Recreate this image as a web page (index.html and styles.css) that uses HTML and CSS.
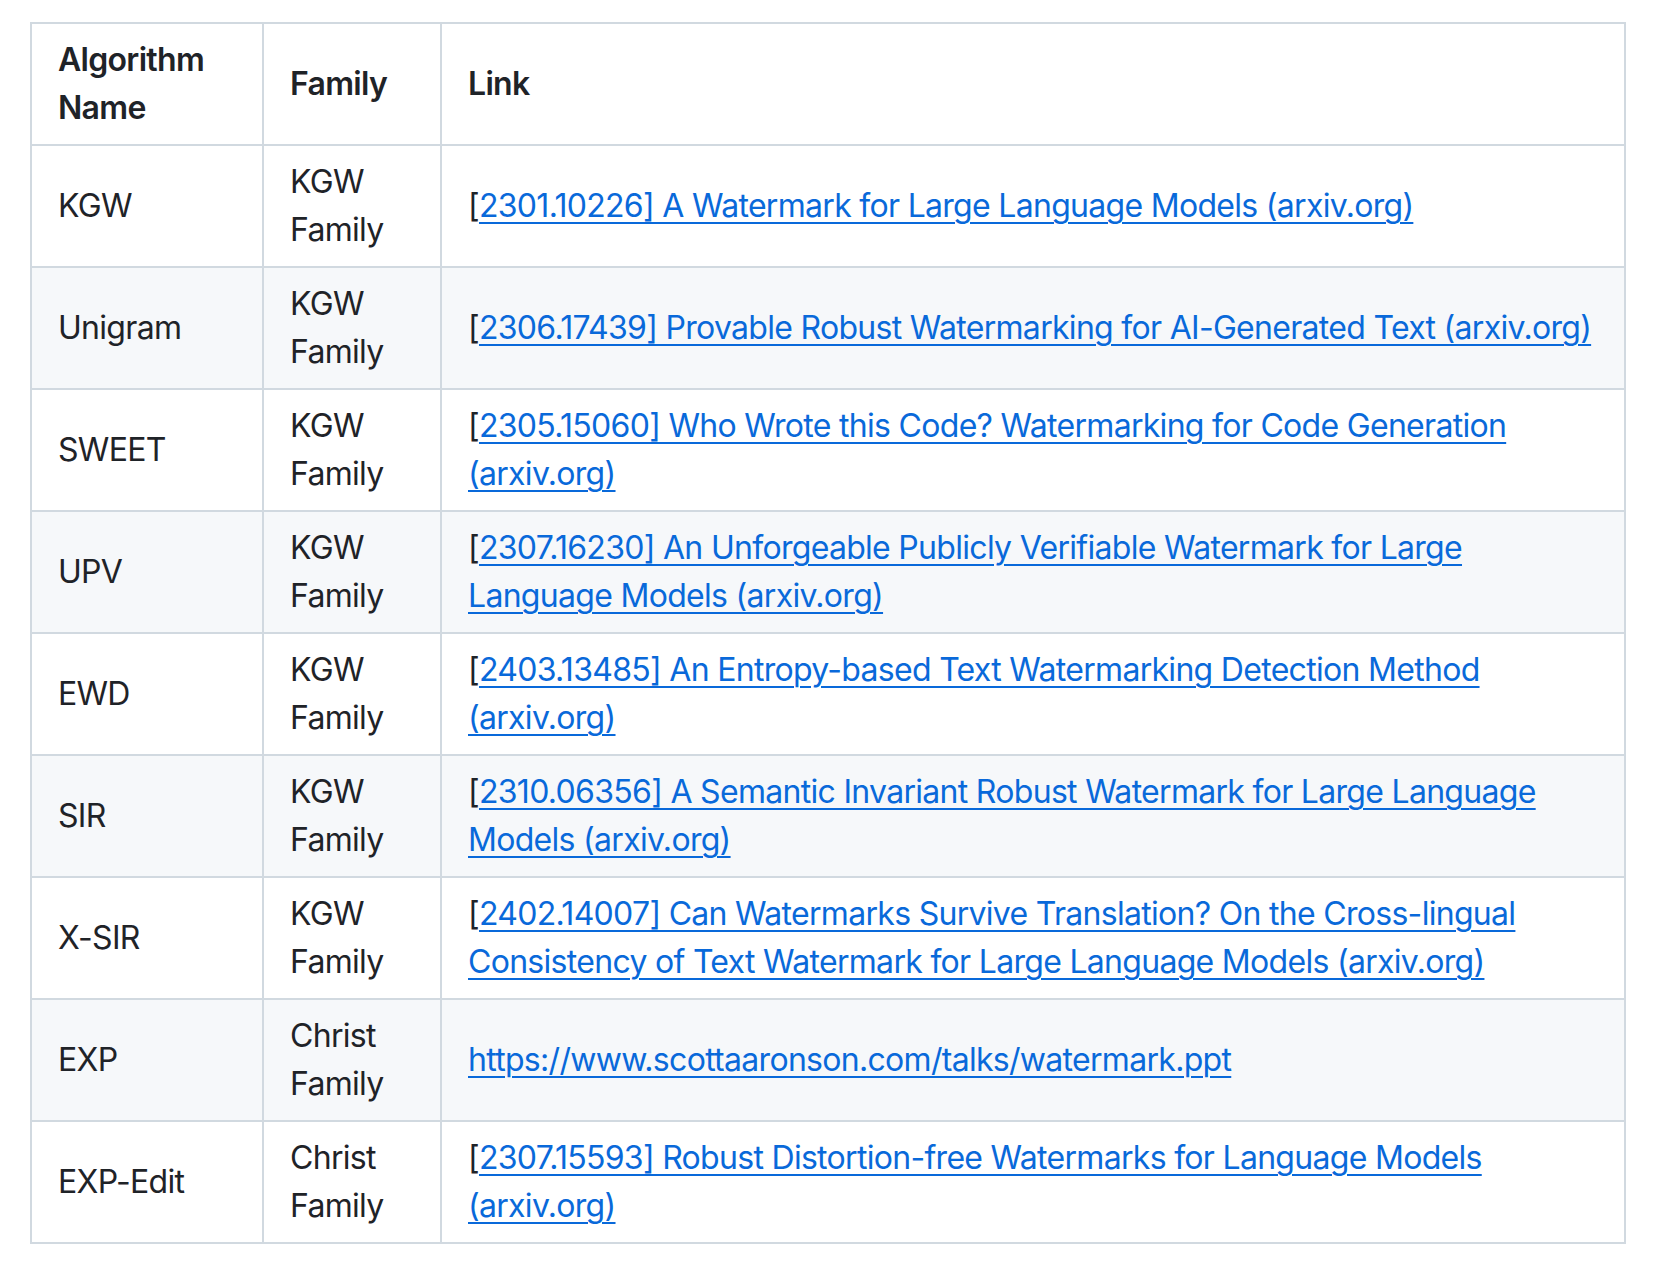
FILE: index.html
```html
<!DOCTYPE html>
<html lang="en">
<head>
<meta charset="utf-8">
<title>Watermark Algorithms</title>
<link rel="stylesheet" href="styles.css">
</head>
<body>
<div class="page">
<table class="algo-table">
  <colgroup>
    <col class="col-name">
    <col class="col-family">
    <col class="col-link">
  </colgroup>
  <thead>
    <tr><th>Algorithm Name</th><th>Family</th><th>Link</th></tr>
  </thead>
  <tbody>
    <tr><td>KGW</td><td>KGW Family</td><td class="link-cell">[<a href="#">2301.10226] A Watermark for Large Language Models (arxiv.org)</a></td></tr>
    <tr><td>Unigram</td><td>KGW Family</td><td class="link-cell">[<a href="#">2306.17439] Provable Robust Watermarking for AI-Generated Text (arxiv.org)</a></td></tr>
    <tr><td>SWEET</td><td>KGW Family</td><td class="link-cell">[<a href="#">2305.15060] Who Wrote this Code? Watermarking for Code Generation (arxiv.org)</a></td></tr>
    <tr><td>UPV</td><td>KGW Family</td><td class="link-cell">[<a href="#">2307.16230] An Unforgeable Publicly Verifiable Watermark for Large Language Models (arxiv.org)</a></td></tr>
    <tr><td>EWD</td><td>KGW Family</td><td class="link-cell">[<a href="#">2403.13485] An Entropy-based Text Watermarking Detection Method (arxiv.org)</a></td></tr>
    <tr><td>SIR</td><td>KGW Family</td><td class="link-cell">[<a href="#">2310.06356] A Semantic Invariant Robust Watermark for Large Language Models (arxiv.org)</a></td></tr>
    <tr><td>X-SIR</td><td>KGW Family</td><td class="link-cell">[<a href="#">2402.14007] Can Watermarks Survive Translation? On the Cross-lingual Consistency of Text Watermark for Large Language Models (arxiv.org)</a></td></tr>
    <tr><td>EXP</td><td>Christ Family</td><td class="link-cell"><a href="#">https://www.scottaaronson.com/talks/watermark.ppt</a></td></tr>
    <tr><td>EXP-Edit</td><td>Christ Family</td><td class="link-cell">[<a href="#">2307.15593] Robust Distortion-free Watermarks for Language Models (arxiv.org)</a></td></tr>
  </tbody>
</table>
</div>
</body>
</html>
```

FILE: styles.css
```css
html, body {
  margin: 0;
  padding: 0;
  background: #ffffff;
}

.page {
  padding: 22px 0 0 30px;
}

.algo-table {
  border-collapse: collapse;
  table-layout: fixed;
  width: 1594px;
  font-family: Inter, "Liberation Sans", sans-serif;
  font-size: 32px;
  line-height: 48px;
  letter-spacing: -0.7px;
  color: #1f2328;
}

.col-name { width: 232px; }
.col-family { width: 178px; }
.col-link { width: 1184px; }

.algo-table th,
.algo-table td {
  border: 2px solid #d1d9e0;
  padding: 12px 26px;
  text-align: left;
  vertical-align: middle;
}

.algo-table .link-cell {
  padding-right: 20px;
}

.algo-table th {
  font-weight: 600;
}

.algo-table tbody tr:nth-child(odd) {
  background: #ffffff;
}

.algo-table tbody tr:nth-child(even) {
  background: #f6f8fa;
}

.algo-table a {
  color: #0969da;
  text-decoration: underline;
  text-decoration-thickness: 2px;
  text-underline-offset: 5px;
}
```
